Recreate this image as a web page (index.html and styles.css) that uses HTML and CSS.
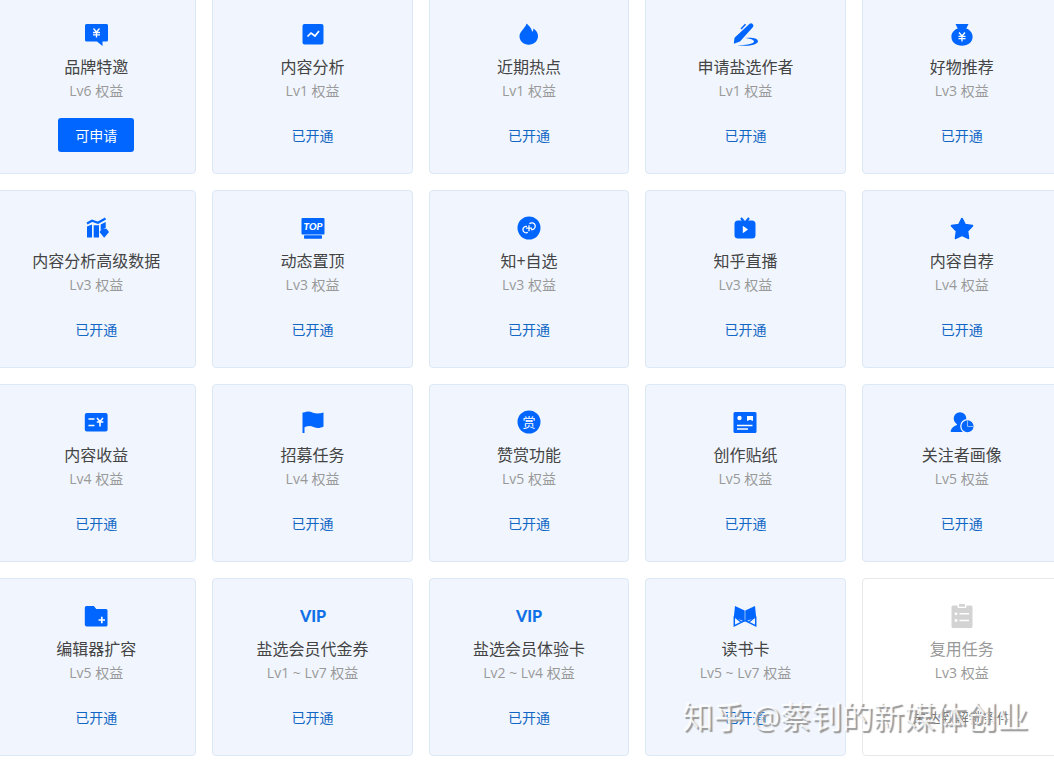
FILE: index.html
```
<!DOCTYPE html>
<html lang="zh-CN">
<head>
  <meta charset="UTF-8">
  <title>创作权益</title>
  <link rel="stylesheet" href="styles.css">
</head>
<body>

  <main class="page">
    <div class="grid">

      <div class="card">
        <svg class="icon" viewBox="0 0 24 24">
          <path d="M2.500 2h20A1.500 1.500 0 0 1 24 3.500v14.500a1.500 1.500 0 0 1-1.500 1.500H18.500V24l-5.500-4.500H2.500A1.500 1.500 0 0 1 1 18V3.500A1.500 1.500 0 0 1 2.500 2z"/>
          <path class="line" d="M9.500 6.500l3 3.500 3-3.500M9 10.500h7M9 12.800h7M12.500 10v5.500" stroke-width="1.300"/>
        </svg>
        <h3>品牌特邀</h3>
        <p>Lv6 权益</p>
        <div class="action"><button type="button">可申请</button></div>
      </div>

      <div class="card">
        <svg class="icon" viewBox="0 0 24 24">
          <rect x="1.500" y="2" width="21" height="20.500" rx="2"/>
          <path class="line" d="M6.500 14.500l3.500-3.500 4 3 4-5" stroke-width="1.700"/>
        </svg>
        <h3>内容分析</h3>
        <p>Lv1 权益</p>
        <div class="action"><a href="#">已开通</a></div>
      </div>

      <div class="card">
        <svg class="icon" viewBox="0 0 24 24">
          <path d="M9.500 1.500c2 1.500 5 4.500 5.700 8.300.8-.8 1.200-1.800 1.200-3.300 2.800 1.600 4.600 4.500 4.600 7.500 0 5-4 8.700-9.300 8.700S2.500 19 2.500 14.200C2.500 9.200 8 7 9.500 1.500z"/>
        </svg>
        <h3>近期热点</h3>
        <p>Lv1 权益</p>
        <div class="action"><a href="#">已开通</a></div>
      </div>

      <div class="card">
        <svg class="icon" viewBox="0 0 24 24">
          <path d="M15.300 3l1-.9a2.300 2.300 0 0 1 3.500 3.200L7 19.500l-6.200 2.200.7-6z"/>
          <path class="stroke" d="M8 7l4.500-4.700" stroke-width="1.500"/>
          <path d="M12.500 16c6-.8 12.500.2 12.500 3.300 0 3.700-11 5.700-21 3.700 8 .5 17-.8 17-3.400 0-1.900-4-2.900-8.500-3.600z"/>
        </svg>
        <h3>申请盐选作者</h3>
        <p>Lv1 权益</p>
        <div class="action"><a href="#">已开通</a></div>
      </div>

      <div class="card">
        <svg class="icon" viewBox="0 0 24 24">
          <path d="M5.500 2h13l-2.200 4.500c3.700 1.500 6.300 4.300 6.300 8.200 0 5.500-4.500 9-10.600 9s-10.600-3.500-10.600-9c0-3.900 2.600-6.700 6.300-8.200z"/>
          <path class="line" d="M9 10.500l3 3.500 3-3.500M8.500 14.300h7M8.500 16.600h7M12 14v5.500" stroke-width="1.300"/>
        </svg>
        <h3>好物推荐</h3>
        <p>Lv3 权益</p>
        <div class="action"><a href="#">已开通</a></div>
      </div>

      <div class="card">
        <svg class="icon" viewBox="0 0 24 24">
          <path class="stroke" d="M3 7.500l5-2.700 6 2 7.500-4.300" stroke-width="2.200"/>
          <path d="M3 10.500l5-2V21.500H3zM9.700 9.200h5.300v12.300H9.700zM16.700 8.500l5-2.500V12L16.700 14z"/>
          <path d="M18 12.800h4.500l2.500 3.200-4.800 5.800-4.700-5.800z"/>
        </svg>
        <h3>内容分析高级数据</h3>
        <p>Lv3 权益</p>
        <div class="action"><a href="#">已开通</a></div>
      </div>

      <div class="card">
        <svg class="icon" viewBox="0 0 24 24">
          <rect x=".5" y="2" width="23" height="16.500" rx="1"/>
          <rect x="3" y="19.200" width="18" height="3.600" rx=".8"/>
          <text class="top" x="12" y="13.800" font-size="10">TOP</text>
        </svg>
        <h3>动态置顶</h3>
        <p>Lv3 权益</p>
        <div class="action"><a href="#">已开通</a></div>
      </div>

      <div class="card">
        <svg class="icon" viewBox="0 0 24 24">
          <circle cx="12" cy="12" r="11.500"/>
          <path class="line" d="M10 10.500a3.200 3.200 0 1 0 .8 5.800M14 13.500A3.400 3.400 0 1 0 12.500 7.800M9 12.200h6M12 9.200v6" stroke-width="1.300"/>
        </svg>
        <h3>知+自选</h3>
        <p>Lv3 权益</p>
        <div class="action"><a href="#">已开通</a></div>
      </div>

      <div class="card">
        <svg class="icon" viewBox="0 0 24 24">
          <rect x="1.500" y="4.500" width="21" height="18" rx="3.500"/>
          <path class="stroke" d="M8 2l2.500 3M16 2l-2.500 3" stroke-width="2.200"/>
          <path class="white" d="M9.800 9.800l5.200 3.700-5.200 3.700z"/>
        </svg>
        <h3>知乎直播</h3>
        <p>Lv3 权益</p>
        <div class="action"><a href="#">已开通</a></div>
      </div>

      <div class="card">
        <svg class="icon" viewBox="0 0 24 24">
          <path class="round" d="M12 2.800l3 5.900 7.300 1.100-5 5.200 1 7.200-6.300-3-6.300 3 1-7.200-5-5.200 7.300-1.100z"/>
        </svg>
        <h3>内容自荐</h3>
        <p>Lv4 权益</p>
        <div class="action"><a href="#">已开通</a></div>
      </div>

      <div class="card">
        <svg class="icon" viewBox="0 0 24 24">
          <rect x=".8" y="3" width="22.800" height="18.500" rx="2"/>
          <path class="line" d="M4.500 9h6M4.500 15.500h6M13 8l3 3.500L19 8M12.800 12h6.600M16 11.500v5" stroke-width="1.600"/>
        </svg>
        <h3>内容收益</h3>
        <p>Lv4 权益</p>
        <div class="action"><a href="#">已开通</a></div>
      </div>

      <div class="card">
        <svg class="icon" viewBox="0 0 24 24">
          <path d="M1.500 2.500H3c3-1.500 6-1.200 9 .3 3 1.200 6.500 1 10.500-.3v14c-3.500 2-7 1.800-10 .4-3-1.400-6-1.200-9 .4V23h-2z"/>
        </svg>
        <h3>招募任务</h3>
        <p>Lv4 权益</p>
        <div class="action"><a href="#">已开通</a></div>
      </div>

      <div class="card">
        <svg class="icon" viewBox="0 0 24 24">
          <circle cx="12" cy="12" r="11.500"/>
          <text class="reward" x="12" y="17" font-size="13">赏</text>
        </svg>
        <h3>赞赏功能</h3>
        <p>Lv5 权益</p>
        <div class="action"><a href="#">已开通</a></div>
      </div>

      <div class="card">
        <svg class="icon" viewBox="0 0 24 24">
          <rect x=".5" y="2" width="23" height="21" rx="1.500"/>
          <circle class="white" cx="6.500" cy="8" r="2.200"/>
          <path class="white" d="M14 6h6v5l-3-1.300-3 1.300z"/>
          <path class="line" d="M4 15.500h15.500M4 19h11" stroke-width="1.300"/>
        </svg>
        <h3>创作贴纸</h3>
        <p>Lv5 权益</p>
        <div class="action"><a href="#">已开通</a></div>
      </div>

      <div class="card">
        <svg class="icon" viewBox="0 0 24 24">
          <circle cx="10" cy="8.500" r="6.300"/>
          <path d="M6.500 12h7v10H1.500c-1 0-1-1-.5-2 1-2.500 3.500-4.300 6-5z"/>
          <circle class="cut" cx="17.500" cy="16.300" r="6.700" stroke-width="1.300"/>
          <path class="thin" d="M17.500 10.500v6h6" stroke-width="1"/>
        </svg>
        <h3>关注者画像</h3>
        <p>Lv5 权益</p>
        <div class="action"><a href="#">已开通</a></div>
      </div>

      <div class="card">
        <svg class="icon" viewBox="0 0 24 24">
          <path d="M2.500 2h7.300l2.500 3H22a1.500 1.500 0 0 1 1.500 1.500V21a1.500 1.500 0 0 1-1.500 1.500H2.800a2 2 0 0 1-2-2V3.700A1.700 1.700 0 0 1 2.500 2z"/>
          <path class="line" d="M14.500 16h6.500M17.800 12.800v6.500" stroke-width="1.700"/>
        </svg>
        <h3>编辑器扩容</h3>
        <p>Lv5 权益</p>
        <div class="action"><a href="#">已开通</a></div>
      </div>

      <div class="card">
        <svg class="icon" viewBox="0 0 24 24">
          <text class="vip" x="12" y="18" font-size="16">VIP</text>
        </svg>
        <h3>盐选会员代金券</h3>
        <p>Lv1 ~ Lv7 权益</p>
        <div class="action"><a href="#">已开通</a></div>
      </div>

      <div class="card">
        <svg class="icon" viewBox="0 0 24 24">
          <text class="vip" x="12" y="18" font-size="16">VIP</text>
        </svg>
        <h3>盐选会员体验卡</h3>
        <p>Lv2 ~ Lv4 权益</p>
        <div class="action"><a href="#">已开通</a></div>
      </div>

      <div class="card">
        <svg class="icon" viewBox="0 0 24 24">
          <path d="M2 2l9.700 4.500v11L.8 13.500zM22 2l-9.700 4.500v11l10.900-4z"/>
          <path class="stroke" d="M1.300 12.500v9.300l10.500-5.300M22.700 12.500v9.300l-10.500-5.300M2 13l6 5M22 13l-6 5" stroke-width="1.500"/>
        </svg>
        <h3>读书卡</h3>
        <p>Lv5 ~ Lv7 权益</p>
        <div class="action"><a href="#">已开通</a></div>
      </div>

      <div class="card locked">
        <svg class="icon" viewBox="0 0 24 24">
          <path d="M3 1.500h4.500V3a1 1 0 0 0 1 1h7a1 1 0 0 0 1-1V1.500H21a1.500 1.500 0 0 1 1.500 1.500v19.500A1.500 1.500 0 0 1 21 24H3a1.500 1.500 0 0 1-1.500-1.500V3A1.500 1.500 0 0 1 3 1.500z"/>
          <rect x="9" y="0" width="6" height="2.800" rx=".5"/>
          <path class="line" d="M9.500 9.800h9.500M9.500 16.500h9.500" stroke-width="1.600"/>
          <circle class="white" cx="6" cy="9.800" r="1.400"/>
          <circle class="white" cx="6" cy="16.500" r="1.400"/>
        </svg>
        <h3>复用任务</h3>
        <p>Lv3 权益</p>
        <div class="action"><span>未达到解锁条件</span></div>
      </div>

    </div>

    <div class="watermark">知乎 @蔡钊的新媒体创业</div>
  </main>

</body>
</html>
```

FILE: styles.css
```
body {
  margin: 0;
  background: #fff;
  font-family: "Open Sans", "Noto Sans CJK SC", sans-serif;
  overflow: hidden;
}
.page {
  position: relative;
}
/* the grid runs past the window on the left, top and right */
.grid {
  display: grid;
  grid-template-columns: repeat(5, 1fr);
  gap: 16px;
  margin: -4px -8px 0 -4px;
}
.card {
  box-sizing: border-box;
  display: flex;
  flex-direction: column;
  align-items: center;
  padding: 25px 0 21px;
  background: #f1f6fe;
  border: 1px solid #dce8f4;
  border-radius: 4px;
}
.icon {
  width: 24px;
  height: 24px;
  margin-bottom: 9px;
  fill: #0066ff;
  overflow: visible;
}
.icon .white {
  fill: #fff;
}
.icon .line {
  fill: none;
  stroke: #fff;
}
.icon .stroke {
  fill: none;
  stroke: #0066ff;
}
.icon .round {
  stroke: #0066ff;
  stroke-width: 2;
  stroke-linejoin: round;
}
.icon .cut {
  stroke: #f1f6fe;
}
.icon .thin {
  fill: none;
  stroke: #8cbcff;
}
.icon text {
  text-anchor: middle;
}
.icon .top {
  fill: #fff;
  font-family: Lato, sans-serif;
  font-weight: 900;
  font-style: italic;
}
.icon .reward {
  fill: #fff;
}
.icon .vip {
  font-family: Lato, sans-serif;
  font-weight: 900;
  fill: #1070e8;
}
.card h3 {
  margin: 0;
  font-size: 16px;
  font-weight: 400;
  line-height: 24px;
  color: #444;
}
.card p {
  margin: 0 0 15px;
  font-size: 14px;
  line-height: 24px;
  color: #999;
}
.action {
  display: flex;
  align-items: center;
  height: 34px;
  font-size: 14px;
  color: #777;
}
.action a {
  color: #1267c4;
  text-decoration: none;
}
.action button {
  height: 34px;
  padding: 0 17px;
  border: none;
  border-radius: 3px;
  background: #0066ff;
  color: #fff;
  font-family: inherit;
  font-size: 14px;
  cursor: pointer;
}
.locked {
  background: #fff;
  border-color: #e6e8ec;
}
.locked .icon {
  fill: #d3d3d3;
}
.locked h3 {
  color: #999;
}
.watermark {
  position: absolute;
  right: 26px;
  bottom: 18px;
  font-size: 31px;
  line-height: 44px;
  white-space: nowrap;
  color: rgba(255, 255, 255, 0.8);
  text-shadow: 2px 2px 1px #999;
  pointer-events: none;
}
```
